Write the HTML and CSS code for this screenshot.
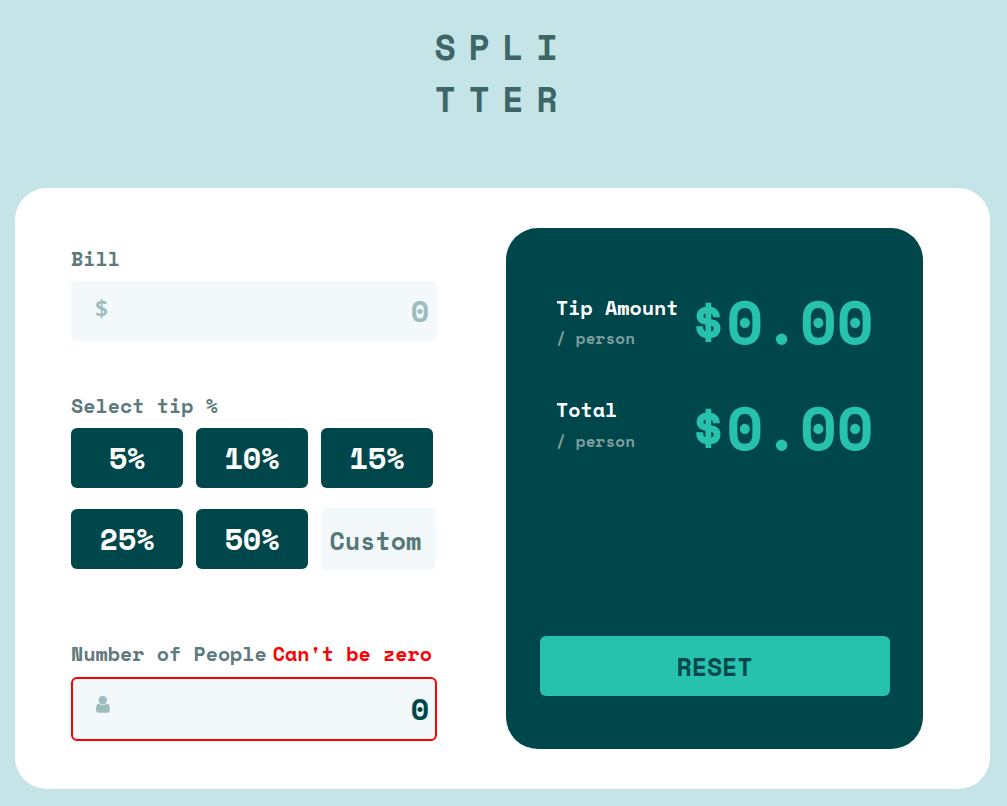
FILE: index.html
```
<!DOCTYPE html>
<html lang="en">
<head>
<meta charset="utf-8">
<title>Splitter</title>
<link rel="stylesheet" href="styles.css">
</head>
<body>
<h1 class="logo"><span>SPLI</span><span>TTER</span></h1>
<main class="card">
  <form class="form">
    <div class="label">Bill</div>
    <div class="field field-bill"><span class="dollar">$</span><span class="value">0</span></div>
    <div class="label">Select tip %</div>
    <div class="tips">
      <button type="button" class="tip">5%</button>
      <button type="button" class="tip">10%</button>
      <button type="button" class="tip">15%</button>
      <button type="button" class="tip">25%</button>
      <button type="button" class="tip">50%</button>
      <div class="custom">Custom</div>
    </div>
    <div class="label people"><span>Number of People</span><span class="error">Can't be zero</span></div>
    <div class="field field-people">
      <svg class="person" width="14" height="17" viewBox="0 0 14 17"><circle cx="6.8" cy="4.2" r="4.2"/><path d="M3 7.700C5 9.500 8.600 9.500 10.600 7.700C13 7.700 13.900 9.500 13.900 13.800C13.900 15.900 12.900 16.800 11.300 16.800H2.500C1 16.800 0 15.900 0 13.800C0 9.500.800 7.700 3 7.700z"/></svg>
      <span class="value">0</span>
    </div>
  </form>
  <section class="panel">
    <div class="row">
      <div class="name">Tip Amount<span class="per">/ person</span></div>
      <div class="amount">$0.00</div>
    </div>
    <div class="row row-total">
      <div class="name">Total<span class="per">/ person</span></div>
      <div class="amount">$0.00</div>
    </div>
    <button type="button" class="reset">RESET</button>
  </section>
</main>
</body>
</html>
```
FILE: styles.css
```
* { box-sizing: border-box; }
body {
  margin: 0;
  height: 806px;
  overflow: hidden;
  background: #c5e4e7;
  font-family: "Space Mono", "DejaVu Sans Mono", monospace;
  font-weight: 700;
}
button { border: 0; padding: 0; font: inherit; }
.logo {
  margin: 0;
  height: 188px;
  padding: 21px 0 0 434.500px;
  display: flex;
  flex-direction: column;
  font-size: 35px;
  line-height: 52px;
  letter-spacing: 12.500px;
  color: #3d6666;
}
.card {
  width: 975px;
  height: 601px;
  margin-left: 15px;
  padding: 40px 67px 40px 56px;
  display: flex;
  justify-content: space-between;
  background: #fff;
  border-radius: 32px;
}
.form { width: 366px; padding-top: 16px; }
.label { height: 37px; font-size: 20px; line-height: 30px; color: #5e7a7d; white-space: nowrap; }
.field {
  display: flex;
  justify-content: space-between;
  background: #f3f8fb;
  border-radius: 6px;
  font-size: 30px;
}
.field-bill { height: 60px; padding: 0 7.800px 0 24px; margin-bottom: 50px; line-height: 60px; color: #9ebbbd; }
.dollar { font: 600 23px/54px "Noto Sans", sans-serif; }
.tips { display: grid; grid-template-columns: 112px 112px 115px; column-gap: 13px; row-gap: 20px; height: 142px; }
.tip { width: 112px; height: 60px; background: #00474b; color: #fff; border-radius: 6px; font-size: 30px; line-height: 60px; }
.tip:nth-child(n + 4) { margin-top: 1px; }
.custom { width: 115px; height: 62px; padding-left: 8.500px; background: #f3f8fb; color: #547878; border-radius: 6px; font-size: 25px; line-height: 66px; }
.people { display: flex; gap: 6px; height: 38px; margin-top: 69px; }
.error { color: #f00; }
.field-people { height: 64px; padding: 0 5.800px 0 23px; border: 2px solid #f00; line-height: 59px; color: #00474b; }
.person { margin-top: 17px; fill: #9ebbbd; }
.panel { width: 417px; height: 521px; padding: 62px 33px 0 34px; background: #00474b; border-radius: 32px; }
.row { display: flex; justify-content: space-between; height: 106px; padding: 0 16.500px 0 16px; color: #fff; }
.name { font-size: 20px; line-height: 36px; white-space: nowrap; }
.row-total .name { margin-top: -4px; }
.per { display: block; font-size: 16px; line-height: 25px; letter-spacing: 0.1px; color: #7f9c9f; }
.row-total .per { line-height: 27px; }
.amount { font-size: 60px; line-height: 63px; color: #26c2ae; }
.reset { display: block; width: 350px; height: 60px; margin-top: 134px; padding-right: 1px; background: #26c2ae; color: #00474b; border-radius: 6px; font-size: 25px; line-height: 62px; letter-spacing: -0.1px; }
```
